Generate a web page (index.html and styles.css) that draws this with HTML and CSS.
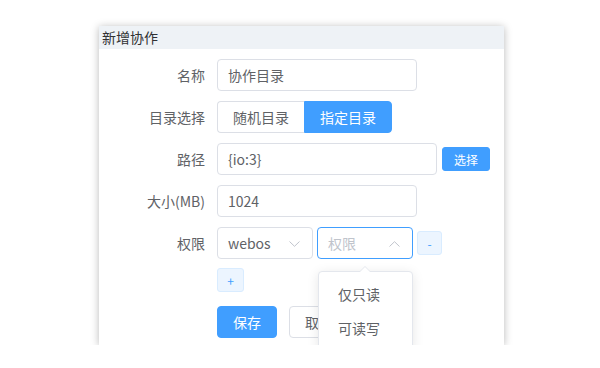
FILE: index.html
```html
<!DOCTYPE html>
<html lang="zh">
<head>
<meta charset="utf-8">
<link rel="stylesheet" href="styles.css">
</head>
<body>
<div class="dialog">
  <div class="dialog-header">新增协作</div>
  <div class="dialog-body">
    <div class="form-item">
      <label class="form-label">名称</label>
      <div class="input w200">协作目录</div>
    </div>
    <div class="form-item">
      <label class="form-label">目录选择</label>
      <div class="radio-group">
        <span class="radio-btn">随机目录</span>
        <span class="radio-btn active">指定目录</span>
      </div>
    </div>
    <div class="form-item">
      <label class="form-label">路径</label>
      <div class="input w220">{io:3}</div>
      <button class="btn-mini primary">选择</button>
    </div>
    <div class="form-item">
      <label class="form-label">大小(MB)</label>
      <div class="input w200">1024</div>
    </div>
    <div class="form-item tight">
      <label class="form-label">权限</label>
      <div class="select">
        <span>webos</span>
        <svg class="chev" width="11" height="6" viewBox="0 0 11 6"><path d="M0.5 0.5 L5.5 5.3 L10.5 0.5" fill="none" stroke="#c0c4cc" stroke-width="1"/></svg>
      </div>
      <div class="select focus">
        <span class="ph">权限</span>
        <svg class="chev" width="11" height="6" viewBox="0 0 11 6"><path d="M0.5 5.5 L5.5 0.7 L10.5 5.5" fill="none" stroke="#c0c4cc" stroke-width="1"/></svg>
      </div>
      <button class="btn-plain minus">-</button>
    </div>
    <div class="form-item plus-row">
      <span class="form-label"></span>
      <button class="btn-plain plus">+</button>
    </div>
    <div class="form-item">
      <span class="form-label"></span>
      <button class="btn primary">保存</button>
      <button class="btn default">取消</button>
    </div>
  </div>
  <div class="dropdown">
    <div class="dropdown-arrow"></div>
    <ul class="dropdown-list">
      <li>仅只读</li>
      <li>可读写</li>
    </ul>
  </div>
</div>
</body>
</html>
```

FILE: styles.css
```css
html, body {
  margin: 0;
  padding: 0;
  background: #ffffff;
  font-family: "Noto Sans CJK SC", "Noto Sans", sans-serif;
}

.dialog {
  position: relative;
  margin-left: 99px;
  margin-top: 26px;
  width: 405px;
  height: 319px;
  background: #fff;
  overflow: hidden;
  box-shadow: 0 1px 8px rgba(0, 0, 0, 0.28);
}

.dialog-header {
  height: 23px;
  line-height: 23px;
  padding-left: 3px;
  font-size: 14px;
  color: #303133;
  background: #eef2f6;
}

.dialog-body {
  padding-top: 10px;
}

.form-item {
  display: flex;
  align-items: center;
  height: 32px;
  margin-bottom: 10px;
}

.form-item.tight {
  margin-bottom: 9px;
}

.form-item.plus-row {
  height: 24px;
  margin-bottom: 14px;
}

.form-label {
  width: 118px;
  flex: none;
  box-sizing: border-box;
  padding-right: 12px;
  text-align: right;
  font-size: 14px;
  color: #606266;
}

.input {
  box-sizing: border-box;
  height: 32px;
  line-height: 30px;
  border: 1px solid #dcdfe6;
  border-radius: 4px;
  padding-left: 10px;
  font-size: 14px;
  color: #606266;
}

.w200 { width: 200px; }
.w220 { width: 220px; }

.radio-group {
  display: flex;
}

.radio-btn {
  box-sizing: border-box;
  height: 32px;
  line-height: 30px;
  padding: 0 15px;
  font-size: 14px;
  color: #606266;
  border: 1px solid #dcdfe6;
  background: #fff;
}

.radio-btn:first-child {
  border-radius: 4px 0 0 4px;
  border-right: none;
  width: 87px;
}

.radio-btn.active {
  background: #409eff;
  border-color: #409eff;
  color: #fff;
  border-radius: 0 4px 4px 0;
  width: 88px;
}

button {
  font-family: inherit;
  cursor: pointer;
  margin: 0;
}

.btn-mini {
  margin-left: 5px;
  width: 48px;
  height: 24px;
  padding: 0;
  border-radius: 3px;
  font-size: 12px;
  border: 1px solid #409eff;
  background: #409eff;
  color: #fff;
}

.select {
  position: relative;
  box-sizing: border-box;
  width: 96px;
  height: 32px;
  line-height: 30px;
  border: 1px solid #dcdfe6;
  border-radius: 4px;
  padding-left: 10px;
  font-size: 14px;
  color: #606266;
  margin-right: 4px;
}

.select.focus {
  border-color: #409eff;
}

.select .ph {
  color: #c0c4cc;
}

.select .chev {
  position: absolute;
  right: 12px;
  top: 13px;
}

.btn-plain {
  box-sizing: border-box;
  height: 24px;
  padding: 0;
  border: 1px solid #d9ecff;
  background: #ecf5ff;
  color: #409eff;
  border-radius: 3px;
  font-size: 12px;
}

.btn-plain.minus {
  width: 25px;
}

.btn-plain.plus {
  width: 27px;
}

.btn {
  box-sizing: border-box;
  width: 60px;
  height: 32px;
  padding: 0;
  border-radius: 4px;
  font-size: 14px;
}

.btn.primary {
  background: #409eff;
  border: 1px solid #409eff;
  color: #fff;
}

.btn.default {
  margin-left: 12px;
  background: #fff;
  border: 1px solid #dcdfe6;
  color: #606266;
}

.dropdown {
  position: absolute;
  left: 219px;
  top: 245px;
  width: 95px;
}

.dropdown-arrow {
  position: absolute;
  left: 41px;
  top: -5px;
  width: 0;
  height: 0;
  border-left: 6px solid transparent;
  border-right: 6px solid transparent;
  border-bottom: 6px solid #e4e7ed;
}

.dropdown-arrow::after {
  content: "";
  position: absolute;
  left: -5px;
  top: 1px;
  border-left: 5px solid transparent;
  border-right: 5px solid transparent;
  border-bottom: 5px solid #fff;
}

.dropdown-list {
  list-style: none;
  margin: 0;
  padding: 5px 0;
  background: #fff;
  border: 1px solid #e4e7ed;
  border-radius: 4px;
  box-shadow: 0 2px 12px rgba(0, 0, 0, 0.1);
}

.dropdown-list li {
  height: 34px;
  line-height: 34px;
  padding-left: 19px;
  font-size: 14px;
  color: #606266;
}
```
